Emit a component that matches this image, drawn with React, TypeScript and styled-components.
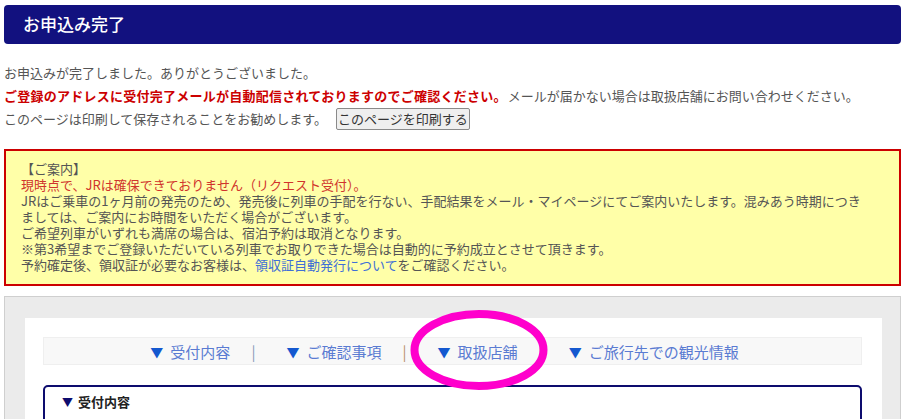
import React from "react";
import styled, { createGlobalStyle } from "styled-components";

const Global = createGlobalStyle`
  html, body { margin: 0; padding: 0; background: #fff; }
  body { font-family: "Noto Sans CJK JP", "Noto Sans", sans-serif; color: #555; overflow: hidden; }
`;

const Page = styled.div`
  position: relative;
  padding: 5px 2px 0 4px;
  height: 414px;
  overflow: hidden;
`;

const Header = styled.h1`
  margin: 0;
  height: 39px;
  line-height: 38px;
  background: #12117f;
  color: #fff;
  border-radius: 4px;
  padding-left: 19px;
  font-size: 17px;
  font-weight: 500;
`;

const Messages = styled.div`
  margin-top: 17px;
  font-size: 13px;
  line-height: 23px;
  color: #555;
`;

const Line = styled.div`
  white-space: nowrap;
  height: 23px;
  display: flex;
  align-items: center;
`;

const Alert = styled.span`
  color: #cc0000;
  font-weight: bold;
  letter-spacing: 0.25px;
  margin-right: 1px;
`;

const PrintButton = styled.button`
  margin-left: 9px;
  height: 22px;
  padding: 0 1px;
  font-family: inherit;
  font-size: 13px;
  line-height: 20px;
  color: #333;
  background: #efefef;
  border: 1px solid #8a8a8a;
  border-radius: 2px;
`;

const Notice = styled.div`
  margin-top: 19px;
  background: #ffffa8;
  border: 2px solid #cc0000;
  padding: 10px 15px 11px;
  font-size: 13px;
  line-height: 16px;
  color: #555;
`;

const NoticeRed = styled.div`
  color: #d0342c;
`;

const Link = styled.a`
  color: #3f6fd6;
  text-decoration: none;
`;

const Panel = styled.div`
  margin-top: 10px;
  background: #ebebeb;
  border: 1px solid #cfcfcf;
  padding: 21px 18px 0 20px;
  height: 200px;
`;

const Inner = styled.div`
  background: #fff;
  padding: 19px 20px 0 18px;
  height: 200px;
`;

const Nav = styled.div`
  height: 26px;
  background: #f8f8f8;
  border: 1px solid #efefef;
  display: flex;
  align-items: center;
  justify-content: center;
  padding-right: 16px;
  font-size: 15px;
  color: #5a7bd2;
  white-space: nowrap;
`;

const NavItem = styled.span`
  display: inline-flex;
  align-items: center;
`;

const Tri = styled.span`
  color: #1458cf;
  font-size: 13px;
  margin-right: 7px;
`;

const Sep = styled.span<{ $c: string; $r: number }>`
  color: ${(p) => p.$c};
  margin: 0 ${(p) => p.$r}px 0 21px;
`;

const Section = styled.div`
  margin-top: 20px;
  border: 2px solid #0d0c6e;
  border-radius: 5px;
  padding: 7px 17px;
  height: 80px;
`;

const SectionTitle = styled.div`
  font-size: 13px;
  line-height: 16px;
  font-weight: bold;
  color: #222;
  display: flex;
  align-items: center;
`;

const SmallTri = styled.span`
  font-size: 11px;
  color: #0d0c6e;
  margin-right: 5px;
`;

const Mark = styled.svg`
  position: absolute;
  left: 410px;
  top: 310px;
  pointer-events: none;
`;

export default function App() {
  return (
    <>
      <Global />
      <Page>
        <Header>お申込み完了</Header>
        <Messages>
          <Line>お申込みが完了しました。ありがとうございました。</Line>
          <Line>
            <Alert>ご登録のアドレスに受付完了メールが自動配信されておりますのでご確認ください。</Alert>
            メールが届かない場合は取扱店舗にお問い合わせください。
          </Line>
          <Line>
            このページは印刷して保存されることをお勧めします。
            <PrintButton>このページを印刷する</PrintButton>
          </Line>
        </Messages>
        <Notice>
          <div>【ご案内】</div>
          <NoticeRed>現時点で、JRは確保できておりません（リクエスト受付）。</NoticeRed>
          <div>
            JRはご乗車の1ヶ月前の発売のため、発売後に列車の手配を行ない、手配結果をメール・マイページにてご案内いたします。混みあう時期につき
            <br />
            ましては、ご案内にお時間をいただく場合がございます。
          </div>
          <div>ご希望列車がいずれも満席の場合は、宿泊予約は取消となります。</div>
          <div>※第3希望までご登録いただいている列車でお取りできた場合は自動的に予約成立とさせて頂きます。</div>
          <div>
            予約確定後、領収証が必要なお客様は、<Link href="#">領収証自動発行について</Link>をご確認ください。
          </div>
        </Notice>
        <Panel>
          <Inner>
            <Nav>
              <NavItem><Tri>▼</Tri>受付内容</NavItem>
              <Sep $c="#8a9ab8" $r={31}>|</Sep>
              <NavItem><Tri>▼</Tri>ご確認事項</NavItem>
              <Sep $c="#b8906a" $r={31}>|</Sep>
              <NavItem><Tri>▼</Tri>取扱店舗</NavItem>
              <Sep $c="#b8906a" $r={26}>|</Sep>
              <NavItem><Tri>▼</Tri>ご旅行先での観光情報</NavItem>
            </Nav>
            <Section>
              <SectionTitle><SmallTri>▼</SmallTri>受付内容</SectionTitle>
            </Section>
          </Inner>
        </Panel>
        <Mark width="138" height="80" viewBox="0 0 138 80">
          <ellipse cx="69" cy="40" rx="64.5" ry="36" fill="none" stroke="#ff00cc" strokeWidth="8" />
        </Mark>
      </Page>
    </>
  );
}
